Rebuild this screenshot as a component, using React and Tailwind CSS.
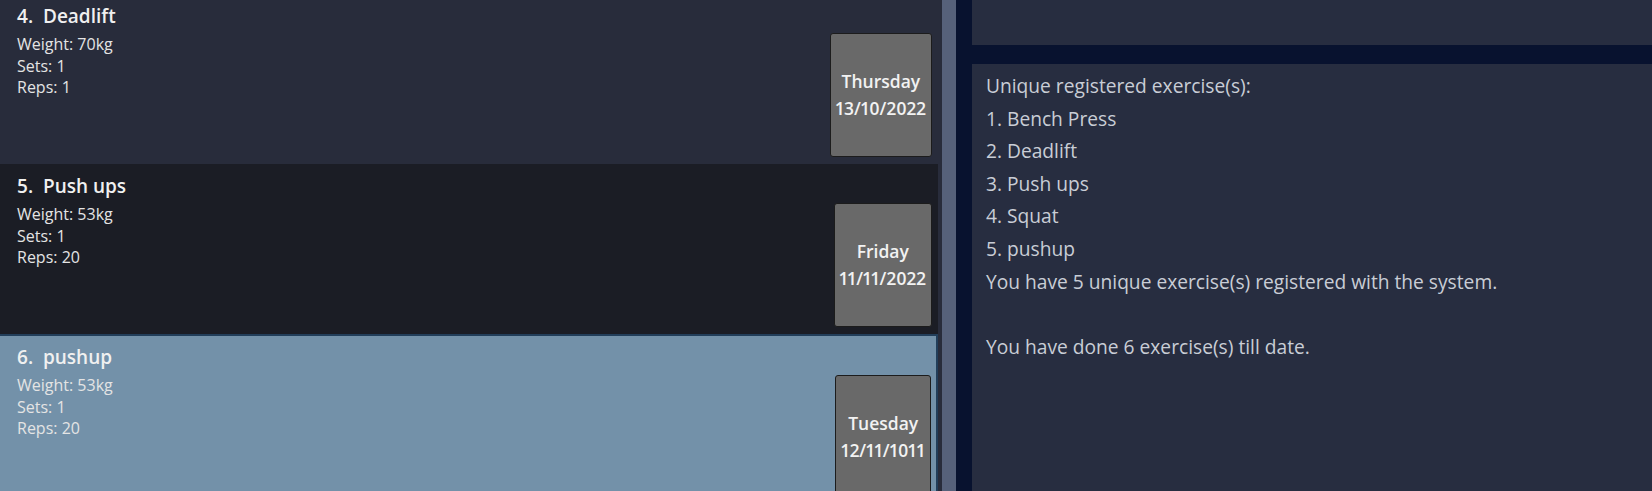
const EXERCISES = [
  { id: 4, name: 'Deadlift', weight: '70kg', sets: 1, reps: 1, day: 'Thursday', date: '13/10/2022', tone: 'plain' },
  { id: 5, name: 'Push ups', weight: '53kg', sets: 1, reps: 20, day: 'Friday', date: '11/11/2022', tone: 'dark' },
  { id: 6, name: 'pushup', weight: '53kg', sets: 1, reps: 20, day: 'Tuesday', date: '12/11/1011', tone: 'selected' },
];

const RESULT_LINES = [
  'Unique registered exercise(s):',
  '1. Bench Press',
  '2. Deadlift',
  '3. Push ups',
  '4. Squat',
  '5. pushup',
  'You have 5 unique exercise(s) registered with the system.',
  '',
  'You have done 6 exercise(s) till date.',
];

function ExerciseCard({ ex }) {
  const tone =
    ex.tone === 'selected'
      ? 'bg-[#7391a9] border-t-2 border-r-2 border-b-2 border-[#223e5a] pl-[17px] pr-[5px]'
      : ex.tone === 'dark'
      ? 'bg-[#1b1d25] pl-[17px] pr-[6px]'
      : 'bg-[#282c3b] pl-[17px] pr-[6px]';

  return (
    <div className={`flex justify-between h-[170px] w-[938px] shrink-0 ${tone}`}>
      <div className={`${ex.tone === 'selected' ? 'pt-[8px]' : 'pt-[9px]'} text-[#f0f0f0]`}>
        <div className="text-[19px] leading-[26px] font-semibold whitespace-pre">
          {ex.id}.{'  '}{ex.name}
        </div>
        <div className="mt-[5px] text-[16px] leading-[21.6px] text-[#e4e4e4]">
          <p>Weight: {ex.weight}</p>
          <p>Sets: {ex.sets}</p>
          <p>Reps: {ex.reps}</p>
        </div>
      </div>
      <div className="mt-[39px] h-[124px] flex flex-col items-center justify-center px-[5px] rounded-[3px] border border-[#1c1c1c] bg-[#696969] text-[#f2f2f2] text-[17.5px] leading-[27px] font-semibold proportional-nums">
        <span>{ex.day}</span>
        <span>{ex.date}</span>
      </div>
    </div>
  );
}

export default function App() {
  return (
    <div
      className="flex w-[1652px] h-[491px] overflow-hidden bg-[#08122f]"
      style={{ fontFamily: '"Open Sans", "Noto Sans", sans-serif' }}
    >
      <div className="flex w-[956px] shrink-0">
        <div className="w-[942px] bg-[#282c3b] overflow-hidden">
          <div className="flex flex-col mt-[-6px]">
            {EXERCISES.map((ex) => (
              <ExerciseCard key={ex.id} ex={ex} />
            ))}
          </div>
        </div>
        <div className="w-[14px] bg-[#56617a]" />
      </div>

      <div className="ml-[16px] flex-1 flex flex-col gap-[19px]">
        <div className="h-[45px] bg-[#272d40]" />
        <div className="flex-1 bg-[#272d40] pl-[14px] pt-[6px] text-[19.2px] leading-[32.6px] text-[#c9cdd6]">
          {RESULT_LINES.map((line, i) => (
            <p key={i} className="min-h-[32.6px]">{line}</p>
          ))}
        </div>
      </div>
    </div>
  );
}
